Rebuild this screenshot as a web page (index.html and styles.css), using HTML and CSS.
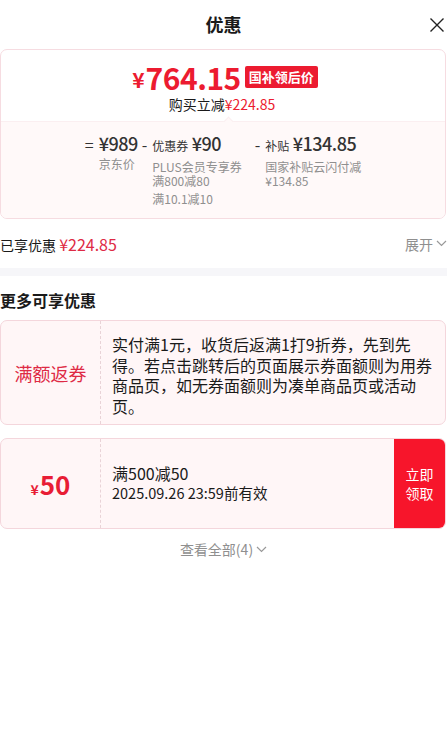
FILE: index.html
```html
<!DOCTYPE html>
<html lang="zh-CN">
<head>
<meta charset="utf-8">
<title>优惠</title>
<link rel="stylesheet" href="styles.css">
</head>
<body>
<header class="hdr">
  <span></span>
  <h1 class="title">优惠</h1>
  <svg class="close" width="16" height="16" viewBox="0 0 16 16"><path d="M1.5 1.5L14.5 14.5M14.5 1.5L1.5 14.5" stroke="#222" stroke-width="1.4" fill="none"/></svg>
</header>

<section class="price-card">
  <div class="pc-top">
    <div class="final"><span class="yen">¥</span><span class="num">764.15</span><span class="badge">国补领后价</span></div>
    <div class="save">购买立减<span class="red">¥224.85</span></div>
  </div>
  <div class="pc-bottom">
    <span class="notch"></span>
    <div class="calc">
      <div class="term">
        <span class="op">=</span>
        <div class="tb">
          <div class="amt">¥989</div>
          <div class="lbl">京东价</div>
        </div>
      </div>
      <div class="term">
        <span class="op">-</span>
        <div class="tb">
          <div class="amt"><span class="kind">优惠券</span> ¥90</div>
          <div class="lbl">PLUS会员专享券</div>
          <div class="lbl next">满800减80</div>
          <div class="lbl sep">满10.1减10</div>
        </div>
      </div>
      <div class="term t3">
        <span class="op">-</span>
        <div class="tb">
          <div class="amt"><span class="kind">补贴</span> ¥134.85</div>
          <div class="lbl">国家补贴云闪付减</div>
          <div class="lbl next">¥134.85</div>
        </div>
      </div>
    </div>
  </div>
</section>

<div class="enjoyed">
  <div class="en-l">已享优惠 <span class="en-amt">¥224.85</span></div>
  <div class="en-r">展开<svg width="11" height="7" viewBox="0 0 11 7"><path d="M1 1L5.5 5.5L10 1" stroke="#999" stroke-width="1.2" fill="none"/></svg></div>
</div>

<div class="band"></div>

<h2 class="sec-title">更多可享优惠</h2>

<div class="coupon c1">
  <div class="c-left"><span class="c-type">满额返券</span></div>
  <div class="c-desc">实付满1元，收货后返满1打9折券，先到先得。若点击跳转后的页面展示券面额则为用券商品页，如无券面额则为凑单商品页或活动页。</div>
</div>

<div class="coupon c2">
  <div class="c-left"><span class="c-val"><span class="c-yen">¥</span>50</span></div>
  <div class="c-mid">
    <div class="c-rule">满500减50</div>
    <div class="c-date">2025.09.26 23:59前有效</div>
  </div>
  <div class="c-btn">立即<br>领取</div>
</div>

<div class="more">查看全部(4)<svg width="11" height="7" viewBox="0 0 11 7"><path d="M1 1L5.5 5.5L10 1" stroke="#999" stroke-width="1.2" fill="none"/></svg></div>
</body>
</html>
```

FILE: styles.css
```css
* { box-sizing: border-box; }
body {
  margin: 0;
  width: 447px;
  font-family: "Noto Sans CJK SC", "Noto Sans", sans-serif;
  color: #1a1a1a;
  background: #fff;
}

.hdr {
  height: 49px;
  display: grid;
  grid-template-columns: 1fr auto 1fr;
  align-items: center;
}
.title {
  margin: 0 0 2px;
  font-size: 18px;
  font-weight: 700;
  line-height: 1;
  color: #1a1a1a;
}
.close {
  justify-self: end;
  margin-right: 2px;
  margin-top: 1px;
}

.price-card {
  width: 446px;
  border: 1px solid #f6dce1;
  border-radius: 7px;
  overflow: hidden;
}
.pc-top {
  height: 71px;
  display: flex;
  flex-direction: column;
  align-items: center;
  padding-top: 10px;
}
.final {
  display: flex;
  align-items: center;
  height: 34px;
  line-height: 1;
  color: #ec1b30;
  font-weight: 700;
  margin-left: 4px;
}
.yen {
  font-size: 21px;
  line-height: 1;
  margin-top: 5px;
  margin-right: 1px;
}
.num {
  font-size: 30px;
  letter-spacing: -0.5px;
  line-height: 1;
}
.badge {
  margin-left: 4px;
  background: #ec1b30;
  color: #fff;
  font-size: 13px;
  line-height: 22px;
  height: 22px;
  padding: 0 4px;
  border-radius: 2px;
  font-weight: 700;
}
.save {
  font-size: 14px;
  line-height: 20px;
  color: #1a1a1a;
  margin-left: -2px;
}
.red { color: #ec1b30; }

.pc-bottom {
  position: relative;
  background: #fff9f9;
  border-top: 1px solid #fbeff1;
  padding: 10px 0 12px;
}
.notch {
  position: absolute;
  left: 224px;
  top: -4px;
  width: 7px;
  height: 7px;
  background: #fff9f9;
  border-left: 1px solid #fbeff1;
  border-top: 1px solid #fbeff1;
  transform: rotate(45deg);
}
.calc {
  display: flex;
  justify-content: center;
  padding-left: 0;
}
.term {
  display: flex;
  align-items: baseline;
  margin-right: 4px;
}
.term.t3 { margin-left: 9px; margin-right: 0; }
.op {
  font-size: 16px;
  color: #333;
  margin-right: 5px;
}
.amt {
  font-size: 18px;
  line-height: 22px;
  color: #333;
  font-weight: 500;
  letter-spacing: -0.5px;
  white-space: nowrap;
}
.kind {
  font-size: 12px;
  font-weight: 400;
  letter-spacing: 0;
}
.lbl {
  font-size: 12px;
  line-height: 14px;
  color: #8f8f8f;
  margin-top: 3px;
  white-space: nowrap;
}
.lbl.next { margin-top: 0; }
.lbl.sep { margin-top: 4px; }

.enjoyed {
  height: 49px;
  display: flex;
  align-items: center;
  justify-content: space-between;
}
.en-l {
  font-size: 14px;
  color: #1a1a1a;
}
.en-amt {
  font-size: 16px;
  color: #de2a45;
}
.en-r {
  font-size: 14px;
  color: #8f8f8f;
  display: flex;
  align-items: center;
  gap: 3px;
}

.band {
  height: 8px;
  background: #f6f6f9;
}
.sec-title {
  margin: 0;
  font-size: 16px;
  font-weight: 700;
  line-height: 20px;
  padding: 14px 0 10px;
}

.coupon {
  width: 446px;
  border: 1px solid #f4d6dc;
  border-radius: 7px;
  background: #fff6f7;
  overflow: hidden;
  display: grid;
}
.c1 {
  grid-template-columns: 100px 1fr;
  min-height: 105px;
}
.c-left {
  border-right: 1px dashed #e9d3d7;
  display: flex;
  align-items: center;
  justify-content: center;
}
.c-type {
  font-size: 18px;
  color: #de2a45;
}
.c-desc {
  font-size: 16px;
  line-height: 20.5px;
  padding: 13px 10px 8px 11px;
  color: #1a1a1a;
}
.c2 {
  margin-top: 13px;
  grid-template-columns: 100px 1fr 51px;
  height: 91px;
}
.c-val {
  color: #e81d35;
  font-weight: 700;
  font-size: 26px;
  line-height: 1;
}
.c-yen {
  font-size: 14px;
  margin-right: 1px;
}
.c-mid {
  display: flex;
  flex-direction: column;
  justify-content: center;
  padding-left: 11px;
  padding-bottom: 2px;
}
.c-rule {
  font-size: 16px;
  line-height: 20px;
}
.c-date {
  font-size: 14.5px;
  line-height: 20px;
}
.c-btn {
  background: #f7152b;
  color: #fff;
  font-size: 14px;
  line-height: 19px;
  display: flex;
  align-items: center;
  justify-content: center;
  text-align: center;
}

.more {
  height: 40px;
  display: flex;
  align-items: center;
  justify-content: center;
  gap: 3px;
  font-size: 14px;
  color: #8f8f8f;
}
```
